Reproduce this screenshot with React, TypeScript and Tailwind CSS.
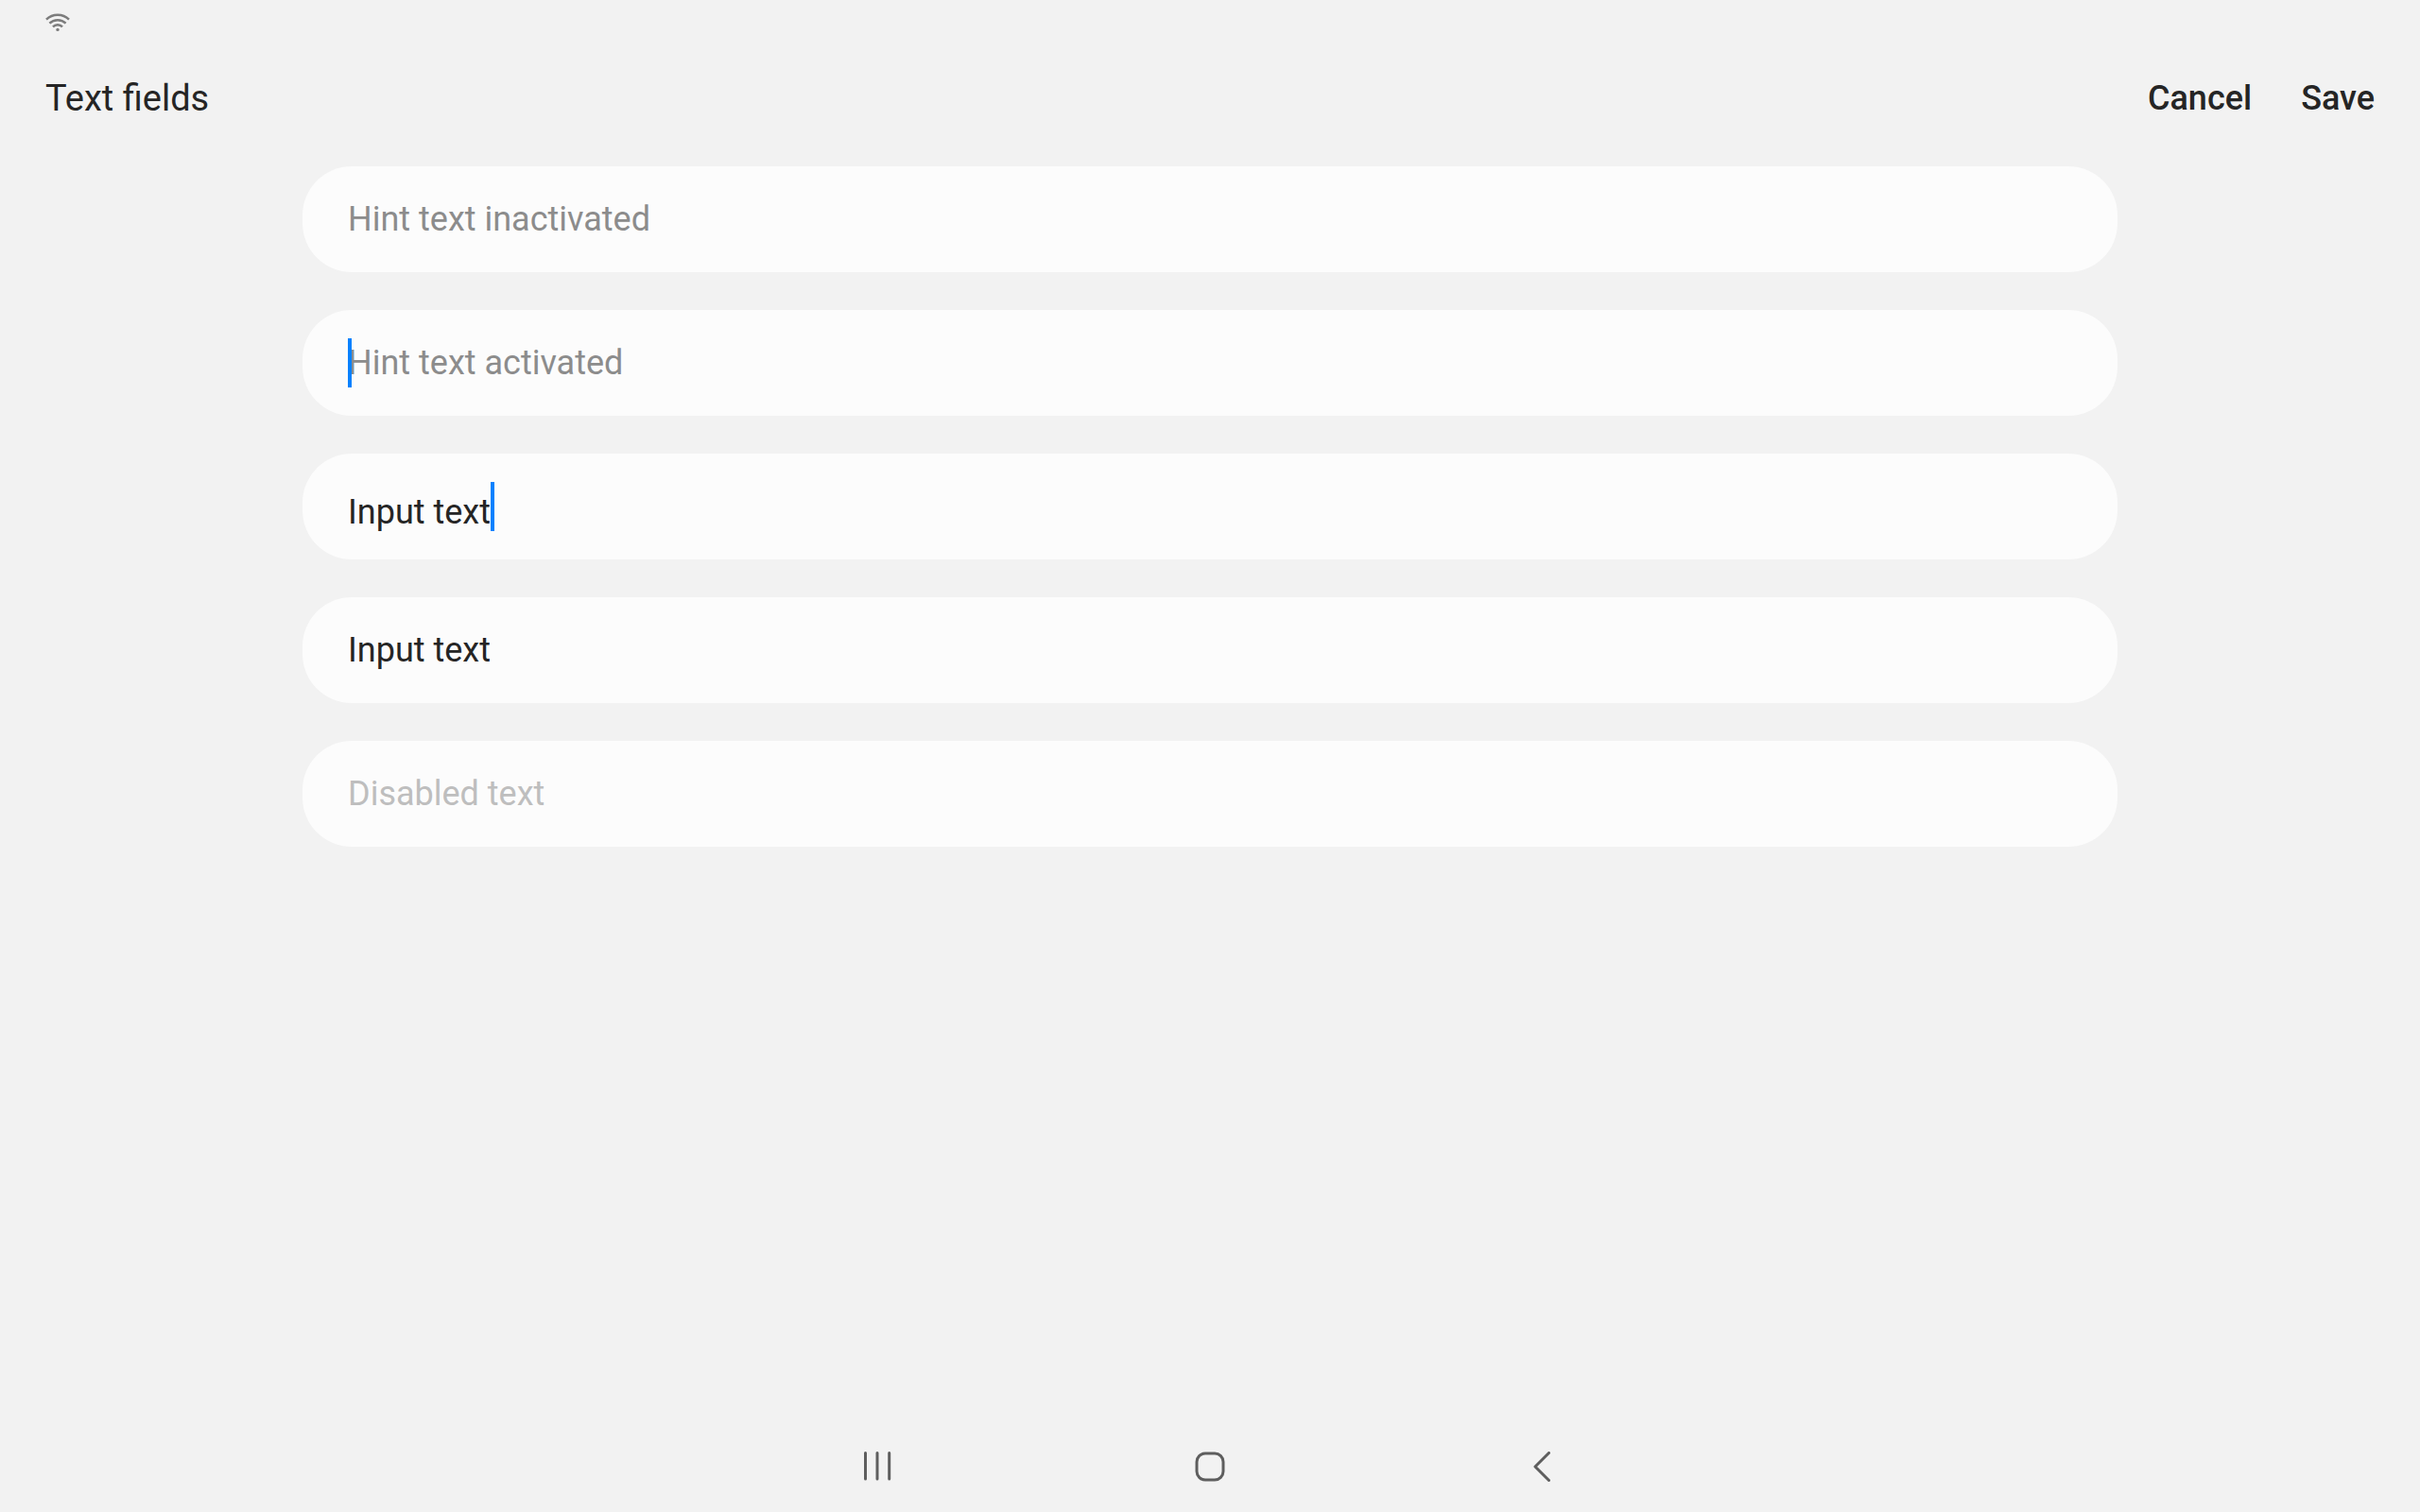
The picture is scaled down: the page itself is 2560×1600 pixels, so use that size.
import type { InputHTMLAttributes } from 'react';

type FieldProps = InputHTMLAttributes<HTMLInputElement> & {
  label: string;
  caret?: 'start' | 'end';
};

function Caret() {
  return <span aria-hidden="true" className="relative z-10 h-13 w-1 shrink-0 bg-[#0381fe]" />;
}

function Field({ label, caret, ...input }: FieldProps) {
  return (
    <div className="flex h-28 items-center rounded-[52px] bg-[#fcfcfc] px-12">
      {caret === 'start' && (
        <span className="-mr-1 flex">
          <Caret />
        </span>
      )}
      <input
        type="text"
        aria-label={label}
        className={`h-full min-w-0 bg-transparent text-[36px] text-[#252525] outline-none placeholder:text-[#8c8c8c] disabled:text-[#bebebe] ${
          caret === 'end' ? 'field-sizing-content pt-3' : 'flex-1'
        }`}
        {...input}
      />
      {caret === 'end' && <Caret />}
    </div>
  );
}

function WifiIcon() {
  return (
    <svg width="28" height="22" viewBox="0 0 28 22" fill="none" stroke="#7c7c7c" strokeWidth="2.5" role="img" aria-label="Wi-Fi">
      <path d="M2 7.7C8.6 1.2 19.4 1.2 26 7.7" />
      <path d="M5.4 11.6C10.2 7 17.8 7 22.6 11.6" />
      <path d="M9 15.4C11.7 12.5 16.3 12.5 19 15.4" />
      <circle cx="14" cy="18.4" r="1.7" fill="#7c7c7c" stroke="none" />
    </svg>
  );
}

const navIcon = {
  width: 32,
  height: 32,
  viewBox: '0 0 32 32',
  fill: 'none',
  stroke: '#5e5e5e',
  strokeWidth: 3,
};

export default function App() {
  return (
    <div className="flex min-h-screen flex-col bg-[#f2f2f2] font-[Roboto,sans-serif] text-[#252525]">
      <div className="flex h-12 items-center px-[47px]">
        <WifiIcon />
      </div>
      <header className="flex h-28 items-center justify-between px-12">
        <h1 className="text-[38px]">Text fields</h1>
        <div className="flex gap-13 text-[36px] font-medium">
          <button type="button">Cancel</button>
          <button type="button">Save</button>
        </div>
      </header>
      <main className="mx-auto flex w-3/4 flex-col gap-10 pt-4">
        <Field label="Inactive hint field" placeholder="Hint text inactivated" />
        <Field label="Active hint field" placeholder="Hint text activated" caret="start" />
        <Field label="Active input field" defaultValue="Input text" caret="end" />
        <Field label="Input field" defaultValue="Input text" />
        <Field label="Disabled field" defaultValue="Disabled text" disabled />
      </main>
      <nav className="mt-auto flex h-24 items-center justify-center gap-80">
        <button type="button" aria-label="Recents">
          <svg {...navIcon} strokeLinecap="round">
            <path d="M3.5 1.6v27.4M16 1.6v27.4M28.7 1.6v27.4" />
          </svg>
        </button>
        <button type="button" aria-label="Home">
          <svg {...navIcon}>
            <rect x="2" y="2" width="28" height="28" rx="9" />
          </svg>
        </button>
        <button type="button" aria-label="Back">
          <svg {...navIcon} strokeLinecap="round" strokeLinejoin="round">
            <path d="M22.5 1.5L8 16l14.5 14.5" />
          </svg>
        </button>
      </nav>
    </div>
  );
}
